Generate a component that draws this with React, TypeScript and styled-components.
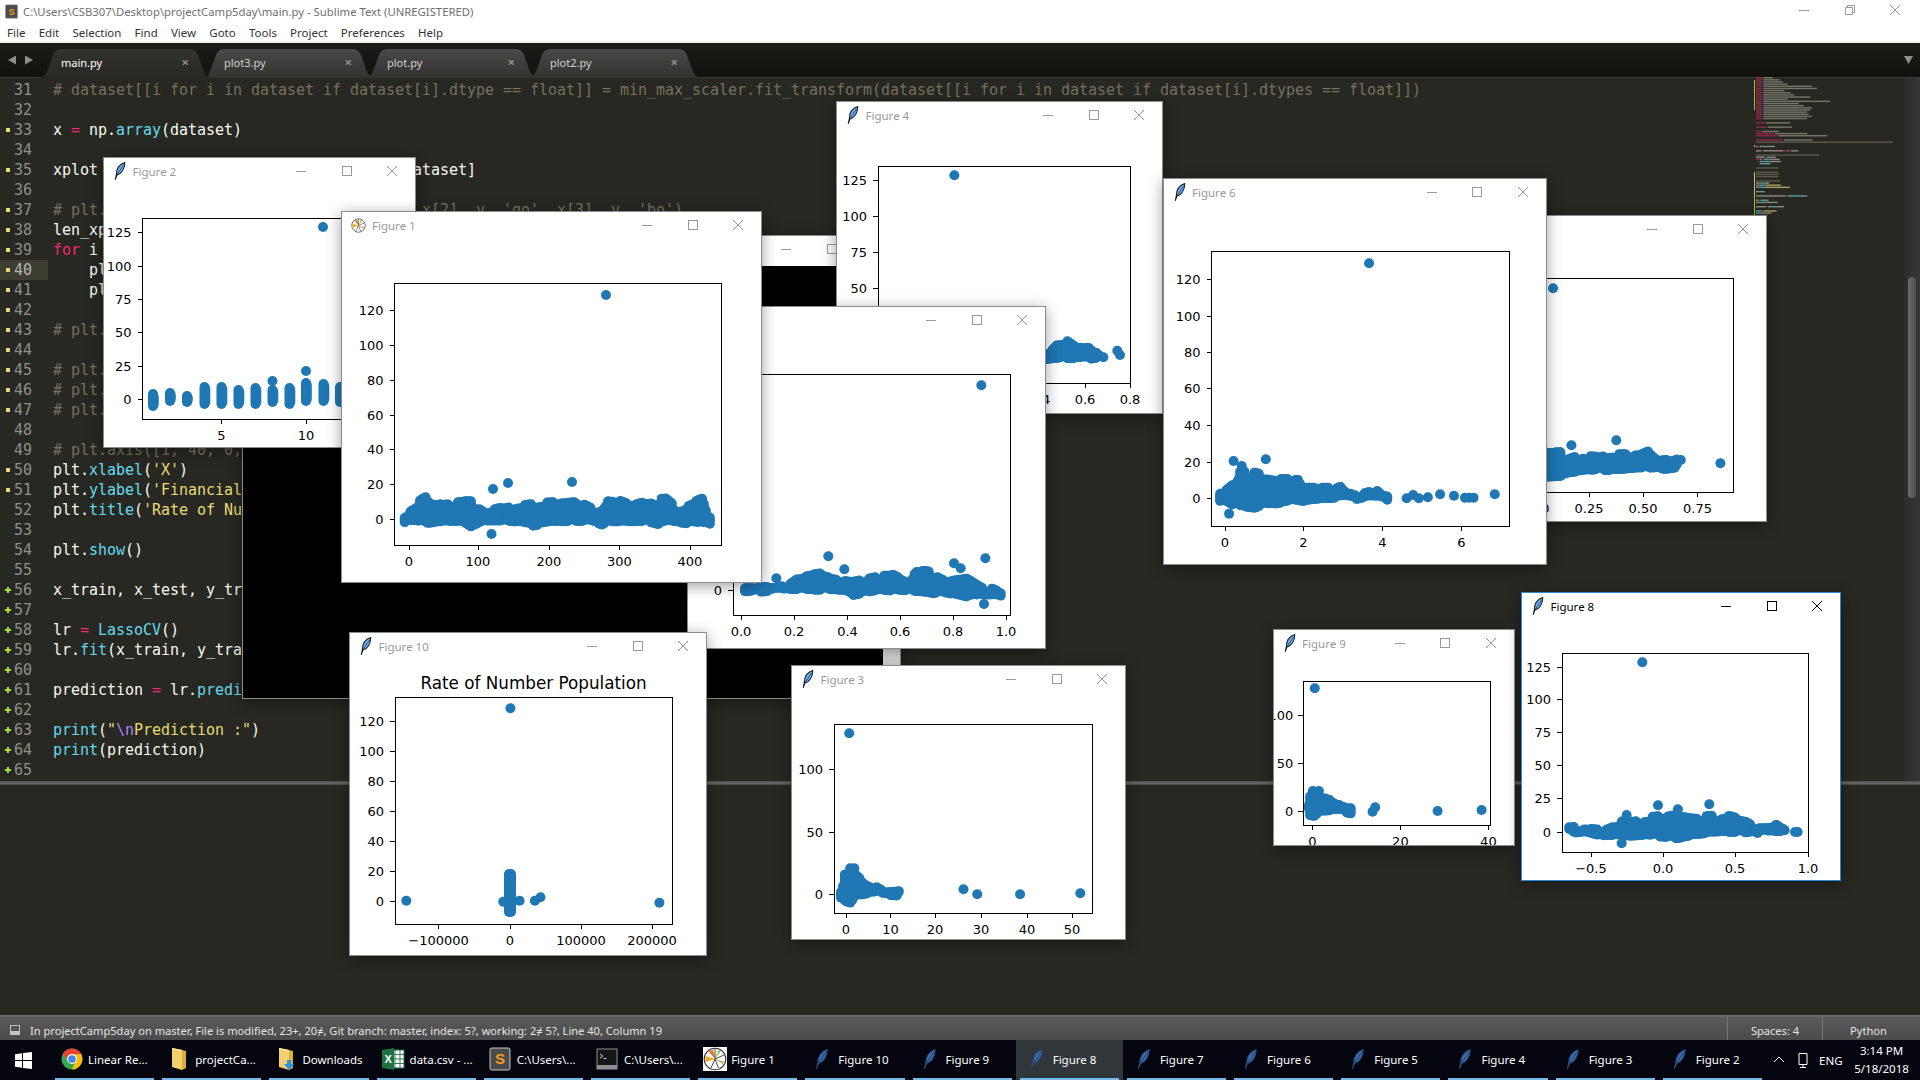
import React from "react";
import styled, { createGlobalStyle } from "styled-components";

const GlobalStyle = createGlobalStyle`
html, body {
    margin: 0;
    padding: 0;
    background: #272822;
}
`;

const UI_FONT = `"Noto Sans", "Open Sans", sans-serif`;
const BLUE = "#1f77b4";

type Tok = [string, string?];

const codeLines: Tok[][] = [
    [["# dataset[[i for i in dataset if dataset[i].dtype == float]] = min_max_scaler.fit_transform(dataset[[i for i in dataset if dataset[i].dtypes == float]])", "com"]],
    [],
    [["x "], ["=", "kw"], [" np."], ["array", "fn"], ["(dataset)"]],
    [],
    [["xplot "], ["=", "kw"], [" [dataset[cols].values "], ["for", "kw"], [" i "], ["in", "kw"], [" dataset]"]],
    [],
    [["# plt.plot(x[0], y, 'ro', x[1], y, 'ys', x[2], y, 'go', x[3], y, 'bo')", "com"]],
    [["len_xplot "], ["=", "kw"], [" "], ["len", "fn"], ["(xplot)"]],
    [["for", "kw"], [" i "], ["in", "kw"], [" "], ["range", "fn"], ["(len_xplot):"]],
    [["    plt."], ["scatter", "fn"], ["(xplot[i], y)"]],
    [["    plt."], ["figure", "fn"], ["()"]],
    [],
    [["# plt.plot(x[0], y, 'ro')", "com"]],
    [],
    [["# plt.plot(x[1], y, 'ys')", "com"]],
    [["# plt.plot(x[2], y, 'go')", "com"]],
    [["# plt.plot(x[3], y, 'bo')", "com"]],
    [],
    [["# plt.axis([1, 40, 0, 140])", "com"]],
    [["plt."], ["xlabel", "fn"], ["("], ["'X'", "str"], [")"]],
    [["plt."], ["ylabel", "fn"], ["("], ["'Financial Rate'", "str"], [")"]],
    [["plt."], ["title", "fn"], ["("], ["'Rate of Number Population'", "str"], [")"]],
    [],
    [["plt."], ["show", "fn"], ["()"]],
    [],
    [["x_train, x_test, y_train, y_test "], ["=", "kw"], [" "], ["train_test_split", "fn"], ["(x, y)"]],
    [],
    [["lr "], ["=", "kw"], [" "], ["LassoCV", "fn"], ["()"]],
    [["lr."], ["fit", "fn"], ["(x_train, y_train)"]],
    [],
    [["prediction "], ["=", "kw"], [" lr."], ["predict", "fn"], ["(x_test)"]],
    [],
    [["print", "fn"], ["("], ["\"", "str"], ["\\n", "esc"], ["Prediction :\"", "str"], [")"]],
    [["print", "fn"], ["(prediction)"]],
    [],
];

const FIRST_LINE = 31;
const markerFor = (n: number) => {
    if (n >= 56) return "add";
    if (n === 33 || n === 35 || (n >= 37 && n <= 47) || n === 50 || n === 51) return "mod";
    return "";
};

const tokColors: Record<string, string> = {
    kw: "#f92672",
    fn: "#66d9ef",
    str: "#e6db74",
    com: "#75715e",
    esc: "#ae81ff",
};

const Screen = styled.div`
position: relative;
width: 1920px;
height: 1080px;
overflow: hidden;
display: flex;
flex-direction: column;
background: #272822;
font-family: ${UI_FONT};
`;

const TitleRow = styled.div`
height: 24px;
background: #fff;
display: flex;
align-items: center;
padding: 0 0 2px 4px;
box-sizing: border-box;
color: #6f6f6f;
font-size: 11.3px;
`;

const TitleText = styled.span`
flex: 1;
margin-left: 4px;
`;

const WinControl = styled.span`
width: 45.5px;
height: 20px;
flex: none;
display: flex;
align-items: center;
justify-content: center;
`;

const WinControls = styled.div`
display: flex;
margin: -3px 2px 0 0;
`;

const MenuBar = styled.div`
height: 17px;
background: #fff;
border-bottom: 2px solid #f2f2f2;
display: flex;
align-items: center;
padding-left: 0.5px;
`;

const MenuItem = styled.span`
padding: 0 6.6px;
font-size: 11.5px;
color: #333;
`;

const TabBar = styled.div`
height: 35px;
box-sizing: border-box;
background: linear-gradient(#1b1b18, #11110e);
border-bottom: 1px solid #3a3a36;
display: flex;
align-items: flex-end;
`;

const TabArrows = styled.div`
width: 38px;
height: 29px;
flex: none;
display: flex;
gap: 9px;
padding: 0 0 5px 8px;
box-sizing: border-box;
align-items: center;
`;

const TabArrow = styled.span<{ $right?: boolean }>`
width: 8px;
height: 9px;
background: #8c8c89;
clip-path: ${p => (p.$right ? "polygon(0 0, 100% 50%, 0 100%)" : "polygon(100% 0, 0 50%, 100% 100%)")};
`;

const Tab = styled.div<{ $active?: boolean }>`
position: relative;
z-index: ${p => (p.$active ? 1 : 0)};
width: 175px;
height: 29px;
flex: none;
margin-right: -12px;
margin-bottom: -1px;
box-sizing: border-box;
padding: 0 24px 3px 23px;
display: flex;
align-items: center;
justify-content: space-between;
font-size: 11px;
color: ${p => (p.$active ? "#fff" : "#cfcfcb")};
background: ${p => (p.$active ? "linear-gradient(#33342f, #272822)" : "linear-gradient(#4a4a48, #313130)")};
clip-path: path("M0 29 C6 29 8 25 10 20 L15 6 C17 2 19 0 24 0 L151 0 C156 0 158 2 160 6 L165 20 C167 25 169 29 175 29 Z");
`;

const TabClose = styled.span`
color: #8e8e8a;
font-size: 13px;
line-height: 13px;
font-weight: 700;
`;

const TabSpacer = styled.div`
flex: 1;
height: 29px;
display: flex;
align-items: center;
justify-content: flex-end;
padding: 0 7px 5px 0;
box-sizing: border-box;
`;

const TabMenuArrow = styled.span`
width: 9px;
height: 8px;
background: #8c8c89;
clip-path: polygon(0 0, 100% 0, 50% 100%);
`;

const EditorPane = styled.div`
height: 703px;
padding-top: 2px;
box-sizing: border-box;
display: flex;
background: #272822;
font-family: "DejaVu Sans Mono", "Liberation Mono", monospace;
font-size: 15px;
line-height: 20px;
letter-spacing: -0.03px;
`;

const Gutter = styled.div`
width: 48px;
flex: none;
color: #8f908a;
`;

const GutterRow = styled.div<{ $current?: boolean }>`
position: relative;
height: 20px;
box-sizing: border-box;
padding-right: 16px;
text-align: right;
background: ${p => (p.$current ? "#3e3d32" : "transparent")};
color: ${p => (p.$current ? "#b4b4ae" : "#8f908a")};
`;

const ModMark = styled.span`
position: absolute;
left: 6px;
top: 8px;
width: 4px;
height: 4px;
background: #e6db74;
`;

const AddMark = styled.span`
position: absolute;
left: 5px;
top: 7px;
width: 6px;
height: 6px;
background:
    linear-gradient(#a6e22e, #a6e22e) center / 6px 2px no-repeat,
    linear-gradient(#a6e22e, #a6e22e) center / 2px 6px no-repeat;
`;

const CodeColumn = styled.div`
width: 1700px;
flex: none;
padding-left: 5px;
box-sizing: border-box;
white-space: pre;
color: #f8f8f2;
overflow: hidden;
`;

const CodeRow = styled.div<{ $guide?: boolean }>`
height: 20px;
background: ${p => (p.$guide ? "linear-gradient(#55554c 50%, transparent 50%) 0 0 / 1px 2px no-repeat repeat-y" : "none")};
`;

const Token = styled.span<{ $kind?: string }>`
color: ${p => (p.$kind ? tokColors[p.$kind] : "inherit")};
`;

const MinimapColumn = styled.div`
width: 150px;
margin-left: 6px;
margin-top: -3px;
flex: none;
opacity: 0.85;
`;

const ScrollTrack = styled.div`
width: 16px;
margin-top: -2px;
flex: none;
padding-top: 199px;
box-sizing: border-box;
background: linear-gradient(90deg, #2c2c2a, #363634);
display: flex;
justify-content: center;
`;

const ScrollThumb = styled.div`
width: 8px;
height: 221px;
border-radius: 4px;
background: linear-gradient(90deg, #6c6c6c, #4e4e4e);
`;

const Divider = styled.div`
height: 4px;
background: linear-gradient(#4a4a48, #6b6b69 50%, #454543);
`;

const BottomPane = styled.div`
flex: 1;
background: #272822;
`;

const StatusBar = styled.div`
height: 25px;
box-sizing: border-box;
border-top: 2px solid #6a6a6a;
background: linear-gradient(#5a5a5a, #4b4b4b);
display: flex;
align-items: center;
color: #e4e4e4;
font-size: 11.1px;
`;

const PanelToggle = styled.span`
width: 10px;
height: 10px;
margin: 2px 10px 0 10px;
border: 1px solid #c4c4c4;
border-bottom-width: 4px;
box-sizing: border-box;
`;

const StatusText = styled.span`
flex: 1;
padding-top: 3px;
`;

const StatusCell = styled.span<{ $w: number; $pad?: number }>`
width: ${p => p.$w}px;
height: 23px;
box-sizing: border-box;
padding: 3px ${p => p.$pad ?? 0}px 0 0;
border-left: 1px solid #777;
display: flex;
align-items: center;
justify-content: center;
`;

const Taskbar = styled.div`
height: 40px;
background: #04050e;
display: flex;
align-items: stretch;
color: #fff;
font-size: 11.5px;
`;

const StartButton = styled.div`
width: 51px;
flex: none;
padding-left: 15px;
box-sizing: border-box;
display: flex;
align-items: center;
`;

const TaskItem = styled.div<{ $active?: boolean }>`
position: relative;
width: 107.2px;
flex: none;
box-sizing: border-box;
padding: 0 0 2px 8.5px;
display: flex;
align-items: center;
gap: 4.5px;
white-space: nowrap;
background: ${p => (p.$active ? "#31363b" : "transparent")};

&::after {
    content: "";
    position: absolute;
    left: 4px;
    right: 4px;
    bottom: 0;
    height: 2px;
    background: #76b9ed;
}
`;

const TaskIcon = styled.span`
width: 24px;
display: flex;
justify-content: center;
flex: none;
`;

const Tray = styled.div`
flex: 1;
display: flex;
align-items: center;
padding-left: 7px;
gap: 10px;
`;

const TrayLang = styled.span`
font-size: 11.5px;
`;

const Clock = styled.div`
width: 62px;
flex: none;
margin-left: -2px;
text-align: center;
line-height: 18px;
font-size: 11.5px;
white-space: nowrap;
`;

const FigureFrame = styled.div<{ $x: number; $y: number; $w: number; $h: number; $active?: boolean }>`
position: absolute;
left: ${p => p.$x}px;
top: ${p => p.$y}px;
width: ${p => p.$w}px;
height: ${p => p.$h}px;
box-sizing: border-box;
background: #fff;
overflow: hidden;
border: 1px solid ${p => (p.$active ? "#2b88d8" : "#8c8c8c")};
box-shadow: 0 3px 14px rgba(0, 0, 0, 0.38);
display: flex;
flex-direction: column;
`;

const FigureTitleBar = styled.div<{ $active?: boolean }>`
height: 30px;
flex: none;
box-sizing: border-box;
padding: 0 0 4px 9px;
display: flex;
align-items: center;
font-size: 11.5px;
background: #fff;
color: ${p => (p.$active ? "#000" : "#999")};
`;

const FigureTitle = styled.span`
flex: 1;
margin-left: 6px;
white-space: nowrap;
`;

const FigureControl = styled.span`
width: 45.5px;
height: 26px;
flex: none;
display: flex;
align-items: center;
justify-content: center;
`;

const ChartSvg = styled.svg`
display: block;
flex: none;

text {
    font-family: "DejaVu Sans", sans-serif;
    font-size: 13px;
    fill: #000;
}
.chartTitle {
    font-size: 16.8px;
}
`;

const ConsoleFrame = styled(FigureFrame)`
background: #000;
`;

const ConsoleBody = styled.div`
flex: 1;
display: flex;
background: #000;
`;

const ConsoleOutput = styled.div`
flex: 1;
`;

const ConsoleScroll = styled.div`
width: 17px;
background: #dcdcdc;
`;

// --- icons ---
const Feather = ({ size = 18, dim = false }: { size?: number; dim?: boolean }) => (
    <svg width={size * 0.75} height={size} viewBox="0 0 12 16">
        <path d="M10.5 .5C6 2 3 6 3 11L2 15.5 3.6 11.6C7.5 10.5 10.5 6 10.5 .5Z" fill={dim ? "#3d6fb0" : "#6fb0ee"} stroke={dim ? "#27497c" : "#14202c"} strokeWidth=".9" strokeLinejoin="round" />
        <path d="M9.5 2.5 3.6 11.2" stroke={dim ? "#1b2c4a" : "#14202c"} strokeWidth=".6" />
    </svg>
);

const PinwheelIcon = ({ size, plate }: { size: number; plate?: boolean }) => (
    <svg width={size} height={size} viewBox="0 0 24 24">
        {plate && <rect width="24" height="24" fill="#fff" />}
        <circle cx="12" cy="12" r="10.8" fill="#fff" stroke="#333" strokeWidth="1.1" />
        <path d="M12 12 5.5 4.5 10 2.5Z" fill="#e8792b" />
        <path d="M12 12 2.5 9 2.5 15Z" fill="#f0a51e" />
        <path d="M12 12 18 4 15.5 3Z" fill="#8cc152" />
        <path d="M12 12 21 14.5 20 17.5Z" fill="#c9b27a" />
        <path d="M12 12 8 21M12 12 15.5 21M12 12 21 8M12 12 12 2" stroke="#444" strokeWidth="1" />
    </svg>
);

const ChromeIcon = () => (
    <svg width="22" height="22" viewBox="0 0 24 24">
        <circle cx="12" cy="12" r="11.5" fill="#34a853" />
        <path d="M12 .5A11.5 11.5 0 0 1 22 6.5L12 7 8 14 2 6.5A11.5 11.5 0 0 1 12 .5Z" fill="#ea4335" />
        <path d="M22 6.5A11.5 11.5 0 0 1 12 23.5L16 14 12 7Z" fill="#fbbc05" />
        <circle cx="12" cy="12" r="5.4" fill="#fff" />
        <circle cx="12" cy="12" r="4.2" fill="#4285f4" />
    </svg>
);

const FolderIcon = ({ download }: { download?: boolean }) => (
    <svg width="18" height="24" viewBox="0 0 18 24">
        <path d="M2 1 12 3V23L2 20Z" fill="#f3d06f" />
        <path d="M12 3 16 4V21L12 23Z" fill="#dcae3d" />
        <path d="M2 1 12 3 12 4 2 2Z" fill="#fff2b8" />
        {download && <path d="M10 13h4v4h3l-5 6-5-6h3Z" fill="#2f8fe0" />}
    </svg>
);

const ExcelIcon = () => (
    <svg width="24" height="24" viewBox="0 0 24 24">
        <rect x="9" y="3" width="14" height="18" fill="#fff" stroke="#1e7145" />
        <path d="M14 3v18M19 3v18M9 7.5h14M9 12h14M9 16.5h14" stroke="#1e7145" strokeWidth=".9" />
        <path d="M1 3 13 1V23L1 21Z" fill="#1e7145" />
        <text x="3.5" y="16" fontSize="11" fontWeight="700" fill="#fff" fontFamily="Liberation Sans">X</text>
    </svg>
);

const SublimeIcon = ({ size = 24 }: { size?: number }) => (
    <svg width={size} height={size} viewBox="0 0 24 24">
        <rect x="2" y="1" width="20" height="22" rx="2" fill="#4b4b4b" stroke="#c9c9c9" />
        <text x="12" y="17" textAnchor="middle" fontSize="15" fontWeight="700" fill="#f59a23" fontFamily="Liberation Sans">S</text>
    </svg>
);

const CmdIcon = () => (
    <svg width="24" height="24" viewBox="0 0 24 24">
        <rect x="2" y="2" width="20" height="20" fill="#161616" stroke="#8f8f8f" />
        <rect x="2" y="18" width="20" height="4" fill="#8f8f8f" />
        <path d="M5 7l3 2-3 2M8.5 11.5h3" stroke="#dcdcdc" strokeWidth=".9" fill="none" />
    </svg>
);

const WindowsLogo = () => (
    <svg width="17" height="17" viewBox="0 0 17 17">
        <path d="M0 2.3 7 1.3V8H0ZM8 1.1 17 0V8H8ZM0 9H7V15.7L0 14.7ZM8 9H17V17L8 15.9Z" fill="#fff" />
    </svg>
);

const Glyph = ({ kind, color }: { kind: "min" | "max" | "close" | "restore"; color: string }) => (
    <svg width="12" height="12" viewBox="0 0 12 12" fill="none" stroke={color} strokeWidth="1">
        {kind === "min" && <path d="M1 6.5h10" />}
        {kind === "max" && <rect x="1.5" y="1.5" width="9" height="9" />}
        {kind === "restore" && <path d="M1.5 3.5h7v7h-7zM3.5 3.5v-2h7v7h-2" />}
        {kind === "close" && <path d="M1 1l10 10M11 1 1 11" />}
    </svg>
);

// --- chart data, all in screen coordinates so the viewBox lines up with the window ---
type Env = [number, number, number];
type Pt = [number, number];
type Tick = [string, number];

interface Fig {
    name: string;
    x: number;
    y: number;
    w: number;
    h: number;
    axes: [number, number, number, number];
    xt: Tick[];
    yt: Tick[];
    dots: Pt[];
    env?: Env[];
    cols?: Env[];
    icon?: "pin";
    active?: boolean;
    title?: string;
    xlabel?: string;
    labelGap?: number;
}

// readings were taken off crops, so convert crop values to screen values here
const toEnv = (ox: number, sx: number, oy: number, rows: Env[]): Env[] =>
    rows.map(([x, t, b]) => [ox + x / sx, oy + t / 3 + 5, oy + b / 3 - 5]);
const toPts = (ox: number, sx: number, oy: number, rows: Pt[]): Pt[] =>
    rows.map(([x, y]) => [ox + x / sx, oy + y / 3]);

const figures: Fig[] = [
    {
        name: "Figure 7", x: 1400, y: 215, w: 367, h: 307,
        axes: [1500, 278, 1733.5, 492],
        xt: [["0.00", 1535], ["0.25", 1589], ["0.50", 1643], ["0.75", 1697.5]], yt: [],
        dots: toPts(1140, 2.45, 170, [[1012, 355], [1057, 826], [1167, 811], [1422, 880], [1325, 870]]),
        env: toEnv(1140, 2.45, 170, [[960, 836, 940], [1030, 836, 935], [1050, 856, 925], [1085, 840, 920], [1110, 850, 918], [1150, 840, 915], [1230, 840, 912], [1250, 830, 912], [1270, 850, 912], [1290, 850, 912], [1315, 846, 908]]),
    },
    {
        name: "Figure 4", x: 836, y: 101, w: 327, h: 313,
        axes: [878, 166, 1130, 383],
        xt: [["0.4", 1040], ["0.6", 1085], ["0.8", 1130]],
        yt: [["125", 180], ["100", 216], ["75", 252], ["50", 288]],
        dots: toPts(830, 3, 90, [[373, 256], [862, 782], [870, 795], [820, 802]]),
        env: toEnv(830, 3, 90, [[600, 775, 825], [650, 775, 825], [680, 745, 825], [712, 740, 822], [740, 760, 822], [785, 757, 822], [800, 775, 820], [812, 790, 815]]),
    },
    {
        name: "Figure 2", x: 103, y: 157, w: 313, h: 291,
        axes: [142.5, 218, 500, 419],
        xt: [["5", 221.5], ["10", 306]],
        yt: [["125", 232], ["100", 266], ["75", 299], ["50", 332], ["25", 366], ["0", 399]],
        dots: [[323, 227], [272.5, 381], [306, 371]],
        cols: [[153, 394, 406], [153.8, 397, 404], [170, 393, 401], [170.8, 395, 399], [187, 396, 402], [187.8, 398, 400], [204.5, 387, 404], [205.3, 389, 402], [221.5, 387, 404], [222.3, 389, 402], [238.5, 390, 404], [239.3, 392, 402], [255.5, 388, 404], [256.3, 390, 402], [272.5, 390, 402], [273.3, 392, 400], [289.5, 388, 404], [290.3, 390, 402], [306, 383, 401], [306.8, 385, 399], [323.5, 384, 401], [324.3, 386, 399], [340, 387, 402]],
    },
    {
        name: "Figure 5", x: 687, y: 306, w: 359, h: 343,
        axes: [733, 374, 1010, 615],
        xt: [["0.0", 741], ["0.2", 794], ["0.4", 847.5], ["0.6", 900], ["0.8", 953], ["1.0", 1006]],
        yt: [["0", 590]],
        dots: toPts(680, 3, 220, [[904, 496], [445, 1009], [916, 1015], [493, 1048], [289, 1075], [822, 1030], [842, 1045], [912, 1152]]),
        env: toEnv(680, 3, 220, [[195, 1098, 1124], [270, 1092, 1125], [320, 1080, 1125], [355, 1055, 1125], [420, 1045, 1125], [490, 1060, 1125], [520, 1065, 1140], [595, 1050, 1125], [640, 1050, 1128], [680, 1070, 1130], [710, 1040, 1130], [760, 1045, 1135], [800, 1065, 1135], [860, 1055, 1150], [900, 1080, 1140], [950, 1102, 1140], [968, 1118, 1140]]),
    },
    {
        name: "Figure 1", x: 341, y: 211, w: 421, h: 372, icon: "pin",
        axes: [394.6, 283, 721, 545],
        xt: [["0", 409], ["100", 478], ["200", 549], ["300", 619.5], ["400", 690]],
        yt: [["120", 310], ["100", 345], ["80", 380], ["60", 415], ["40", 449], ["20", 484], ["0", 519]],
        dots: [[606, 295], [493, 489], [508, 483], [572, 482], [491.5, 534]],
        env: toEnv(0, 2.063, 440, [[835, 225, 250], [850, 185, 258], [878, 160, 265], [900, 185, 262], [920, 175, 262], [955, 173, 262], [972, 173, 278], [1000, 200, 262], [1050, 185, 262], [1100, 175, 272], [1150, 170, 262], [1185, 165, 262], [1220, 190, 262], [1242, 200, 272], [1255, 160, 262], [1300, 185, 262], [1335, 170, 262], [1358, 190, 270], [1365, 155, 262], [1400, 195, 262], [1440, 170, 270], [1452, 163, 265], [1465, 225, 250]]),
    },
    {
        name: "Figure 6", x: 1162.5, y: 178, w: 384, h: 387,
        axes: [1211, 251, 1509, 526],
        xt: [["0", 1224.5], ["2", 1303], ["4", 1382], ["6", 1461]],
        yt: [["120", 279], ["100", 316], ["80", 352], ["60", 388.6], ["40", 425], ["20", 462], ["0", 498]],
        dots: toPts(1140, 2.45, 170, [[560, 280], [228, 873], [307, 868], [248, 888], [217, 1031], [652, 985], [668, 975], [682, 985], [704, 982], [734, 973], [768, 977], [795, 983], [805, 983], [816, 983], [868, 973]]),
        env: toEnv(1140, 2.45, 170, [[195, 965, 995], [205, 955, 1005], [225, 935, 1020], [245, 895, 1025], [280, 895, 1030], [310, 905, 1018], [340, 910, 1015], [365, 910, 1010], [385, 910, 1010], [400, 940, 1008], [440, 940, 1000], [465, 940, 1000], [490, 930, 998], [520, 960, 1000], [555, 950, 998], [575, 940, 998], [605, 975, 998]]),
    },
    {
        name: "Figure 10", x: 349, y: 632, w: 358, h: 324,
        title: "Rate of Number Population", xlabel: "X",
        axes: [395, 697, 672, 924],
        xt: [["\u2212100000", 438.5], ["0", 510], ["100000", 581], ["200000", 652]],
        yt: [["120", 721], ["100", 751], ["80", 781], ["60", 811], ["40", 841], ["20", 871], ["0", 901]],
        dots: toPts(340, 1.96, 620, [[334, 265], [130, 842], [626, 848], [320, 845], [352, 842], [382, 842], [393, 832]]),
        cols: [[509, 874, 912], [511, 874, 912]],
    },
    {
        name: "Figure 3", x: 791, y: 665, w: 335, h: 275,
        axes: [834, 724, 1092.5, 913],
        xt: [["0", 846], ["10", 890.5], ["20", 935], ["30", 981], ["40", 1027], ["50", 1072]],
        yt: [["100", 769], ["50", 832], ["0", 894]],
        dots: toPts(340, 1.96, 620, [[998, 340], [1222, 808], [1249, 823], [1333, 823], [1451, 820], [1000, 745], [1008, 745]]),
        env: toEnv(340, 1.96, 620, [[982, 815, 835], [990, 745, 860], [1000, 735, 865], [1010, 745, 845], [1025, 765, 838], [1040, 782, 836], [1060, 800, 835], [1098, 803, 832]]),
    },
    {
        name: "Figure 9", x: 1272.6, y: 629, w: 242, h: 217, labelGap: 10,
        axes: [1303, 681, 1490, 825],
        xt: [["0", 1312], ["20", 1400], ["40", 1488]],
        yt: [["100", 715], ["50", 763], ["0", 811]],
        dots: toPts(1260, 2.613, 580, [[142, 325], [137, 633], [153, 633], [232, 690], [293, 695], [300, 682], [463, 693], [578, 690]]),
        env: toEnv(1260, 2.613, 580, [[125, 655, 705], [130, 625, 728], [140, 625, 730], [155, 630, 712], [165, 645, 710], [190, 654, 708], [215, 670, 706], [240, 676, 705]]),
    },
    {
        name: "Figure 8", x: 1521, y: 592, w: 320, h: 289, active: true,
        axes: [1562, 653, 1808, 852],
        xt: [["\u22120.5", 1591], ["0.0", 1663], ["0.5", 1735], ["1.0", 1808]],
        yt: [["125", 667], ["100", 699], ["75", 732], ["50", 765], ["25", 798], ["0", 832]],
        dots: [...toPts(1260, 2.613, 580, [[999, 247], [1040, 676], [1174, 673], [945, 790], [958, 705], [1092, 688]]), [1795, 832], [1797.7, 832]],
        env: toEnv(1260, 2.613, 580, [[808, 738, 762], [820, 732, 775], [850, 727, 770], [900, 732, 785], [935, 716, 785], [1000, 703, 780], [1040, 698, 785], [1090, 690, 790], [1120, 695, 783], [1170, 698, 775], [1215, 693, 772], [1270, 710, 772], [1300, 730, 768], [1350, 724, 768], [1375, 745, 768]]),
    },
];

// interpolate the envelope and add lumps so the edge looks like overlapping markers
const rough = (env: Env[], seed: number): Env[] => {
    const out: Env[] = [];
    let s = seed;
    const rnd = () => {
        s = (s * 16807) % 2147483647;
        return (s % 1000) / 1000;
    };
    let lumpTop = 0;
    let lumpBottom = 0;
    let n = 0;
    for (let i = 0; i < env.length - 1; i++) {
        const [x0, t0, b0] = env[i];
        const [x1, t1, b1] = env[i + 1];
        for (let x = x0; x < x1; x += 2) {
            if (n % 4 === 0) {
                lumpTop = rnd() * 7 - 2;
                lumpBottom = rnd() * 3;
            }
            n++;
            const k = (x - x0) / (x1 - x0);
            out.push([x, t0 + (t1 - t0) * k + lumpTop, b0 + (b1 - b0) * k - lumpBottom]);
        }
    }
    return out;
};

const Chart = ({ fig, seed }: { fig: Fig; seed: number }) => {
    const [l, t, r, b] = fig.axes;
    const w = fig.w - 2;
    const h = fig.h - 32;
    const gap = fig.labelGap ?? 11;
    const cols = fig.cols ?? (fig.env ? rough(fig.env, seed) : []);
    return (
        <ChartSvg width={w} height={h} viewBox={`${fig.x + 1} ${fig.y + 31} ${w} ${h}`}>
            {cols.map(([x, y1, y2], i) => (
                <line key={i} x1={x} x2={x} y1={y1} y2={y2} stroke={BLUE} strokeWidth="10" strokeLinecap="round" />
            ))}
            {fig.dots.map(([x, y], i) => (
                <circle key={i} cx={x} cy={y} r="5" fill={BLUE} />
            ))}
            <rect x={l} y={t} width={r - l} height={b - t} fill="none" stroke="#000" strokeWidth="1" shapeRendering="crispEdges" />
            {fig.xt.map(([label, x]) => (
                <g key={label}>
                    <line x1={x} x2={x} y1={b} y2={b + 5} stroke="#000" shapeRendering="crispEdges" />
                    <text x={x} y={b + 16} textAnchor="middle" dominantBaseline="central">{label}</text>
                </g>
            ))}
            {fig.yt.map(([label, y]) => (
                <g key={label}>
                    <line x1={l - 5} x2={l} y1={y} y2={y} stroke="#000" shapeRendering="crispEdges" />
                    <text x={l - gap} y={y} textAnchor="end" dominantBaseline="central">{label}</text>
                </g>
            ))}
            {fig.title && (
                <text className="chartTitle" x={(l + r) / 2} y={t - 14} textAnchor="middle" dominantBaseline="central">{fig.title}</text>
            )}
            {fig.xlabel && (
                <text x={(l + r) / 2} y={b + 40} textAnchor="middle">{fig.xlabel}</text>
            )}
        </ChartSvg>
    );
};

const FigureWindow = ({ fig, seed }: { fig: Fig; seed: number }) => {
    const ctl = fig.active ? "#000" : "#999";
    return (
        <FigureFrame $x={fig.x} $y={fig.y} $w={fig.w} $h={fig.h} $active={fig.active}>
            <FigureTitleBar $active={fig.active}>
                {fig.icon === "pin" ? <PinwheelIcon size={15} /> : <Feather />}
                <FigureTitle>{fig.name}</FigureTitle>
                <FigureControl><Glyph kind="min" color={ctl} /></FigureControl>
                <FigureControl><Glyph kind="max" color={ctl} /></FigureControl>
                <FigureControl><Glyph kind="close" color={ctl} /></FigureControl>
            </FigureTitleBar>
            <Chart fig={fig} seed={seed} />
        </FigureFrame>
    );
};

// minimap drawn from the code itself, first 30 lines are imports/setup we never see in full
const headerLines: [number, number][] = [
    [7, 12], [7, 20], [7, 24], [7, 30], [7, 60], [7, 66], [7, 26], [7, 34], [7, 38], [7, 58], [7, 30], [7, 82],
    [7, 44], [7, 50], [7, 60], [7, 58], [7, 54], [7, 56], [7, 60], [7, 54], [0, 0], [10, 30], [0, 0], [12, 30],
    [0, 0], [6, 20], [20, 40], [24, 60], [0, 0], [30, 35],
];

const Minimap = () => {
    const CW = 0.9;
    const LH = 2.15;
    const rows: React.ReactNode[] = [];
    headerLines.forEach(([kw, rest], i) => {
        if (!kw) return;
        rows.push(<rect key={`h${i}`} x={2} y={i * LH} width={kw * CW} height={1.4} fill="#c22a5e" />);
        rows.push(<rect key={`r${i}`} x={2 + kw * CW + 1} y={i * LH} width={rest * CW * 0.9} height={1.4} fill="#9b9b8e" />);
    });
    codeLines.forEach((line, i) => {
        let col = 0;
        line.forEach(([text, kind], j) => {
            const lead = text.length - text.trimStart().length;
            rows.push(
                <rect
                    key={`c${i}-${j}`}
                    x={2 + (col + lead) * CW}
                    y={(i + 30) * LH}
                    width={(text.length - lead) * CW}
                    height={1.4}
                    fill={kind ? tokColors[kind] : "#b9b9b0"}
                />,
            );
            col += text.length;
        });
    });
    return (
        <svg width="150" height="150" viewBox="0 0 150 150">
            <rect x="0" y="3" width="1" height="30" fill="#a6e22e" />
            <rect x="0" y="68" width="1" height="2" fill="#e6db74" />
            <rect x="0" y="95" width="1" height="30" fill="#e6db74" />
            <rect x="0" y="118" width="1" height="22" fill="#a6e22e" />
            <g opacity="0.8">{rows}</g>
        </svg>
    );
};

const menuItems = ["File", "Edit", "Selection", "Find", "View", "Goto", "Tools", "Project", "Preferences", "Help"];
const tabs = ["main.py", "plot3.py", "plot.py", "plot2.py"];

const taskItems: { label: string; icon: React.ReactNode; active?: boolean }[] = [
    { label: "Linear Re...", icon: <ChromeIcon /> },
    { label: "projectCa...", icon: <FolderIcon /> },
    { label: "Downloads", icon: <FolderIcon download /> },
    { label: "data.csv - ...", icon: <ExcelIcon /> },
    { label: "C:\\Users\\...", icon: <SublimeIcon /> },
    { label: "C:\\Users\\...", icon: <CmdIcon /> },
    { label: "Figure 1", icon: <PinwheelIcon size={24} plate /> },
    { label: "Figure 10", icon: <Feather size={20} dim /> },
    { label: "Figure 9", icon: <Feather size={20} dim /> },
    { label: "Figure 8", icon: <Feather size={20} dim />, active: true },
    { label: "Figure 7", icon: <Feather size={20} dim /> },
    { label: "Figure 6", icon: <Feather size={20} dim /> },
    { label: "Figure 5", icon: <Feather size={20} dim /> },
    { label: "Figure 4", icon: <Feather size={20} dim /> },
    { label: "Figure 3", icon: <Feather size={20} dim /> },
    { label: "Figure 2", icon: <Feather size={20} dim /> },
];

export default function App() {
    return (
        <Screen>
            <GlobalStyle />
            <TitleRow>
                <SublimeIcon size={15} />
                <TitleText>C:\Users\CSB307\Desktop\projectCamp5day\main.py - Sublime Text (UNREGISTERED)</TitleText>
                <WinControls>
                    <WinControl><Glyph kind="min" color="#999" /></WinControl>
                    <WinControl><Glyph kind="restore" color="#999" /></WinControl>
                    <WinControl><Glyph kind="close" color="#999" /></WinControl>
                </WinControls>
            </TitleRow>
            <MenuBar>
                {menuItems.map(m => <MenuItem key={m}>{m}</MenuItem>)}
            </MenuBar>
            <TabBar>
                <TabArrows><TabArrow /><TabArrow $right /></TabArrows>
                {tabs.map((t, i) => (
                    <Tab key={t} $active={i === 0}>
                        <span>{t}</span>
                        <TabClose>×</TabClose>
                    </Tab>
                ))}
                <TabSpacer><TabMenuArrow /></TabSpacer>
            </TabBar>
            <EditorPane>
                <Gutter>
                    {codeLines.map((_, i) => {
                        const n = FIRST_LINE + i;
                        const mark = markerFor(n);
                        return (
                            <GutterRow key={n} $current={n === 40}>
                                {mark === "mod" && <ModMark />}
                                {mark === "add" && <AddMark />}
                                {n}
                            </GutterRow>
                        );
                    })}
                </Gutter>
                <CodeColumn>
                    {codeLines.map((line, i) => (
                        <CodeRow key={i} $guide={i === 9 || i === 10}>
                            {line.map(([text, kind], j) => <Token key={j} $kind={kind}>{text}</Token>)}
                        </CodeRow>
                    ))}
                </CodeColumn>
                <MinimapColumn><Minimap /></MinimapColumn>
                <ScrollTrack><ScrollThumb /></ScrollTrack>
            </EditorPane>
            <Divider />
            <BottomPane />
            <StatusBar>
                <PanelToggle />
                <StatusText>In projectCamp5day on master, File is modified, 23+, 20≠, Git branch: master, index: 5?, working: 2≠ 5?, Line 40, Column 19</StatusText>
                <StatusCell $w={95}>Spaces: 4</StatusCell>
                <StatusCell $w={98} $pad={6}>Python</StatusCell>
            </StatusBar>
            <Taskbar>
                <StartButton><WindowsLogo /></StartButton>
                {taskItems.map((t, i) => (
                    <TaskItem key={i} $active={t.active}>
                        <TaskIcon>{t.icon}</TaskIcon>
                        <span>{t.label}</span>
                    </TaskItem>
                ))}
                <Tray>
                    <svg width="36" height="18" viewBox="0 0 36 18" fill="none" stroke="#fff">
                        <path d="M1 11l5-5 5 5" />
                        <path d="M26 2.5h8v11h-8zM30 13.5v3M27 16.5h6" />
                    </svg>
                    <TrayLang>ENG</TrayLang>
                    <Clock>3:14 PM<br />5/18/2018</Clock>
                </Tray>
            </Taskbar>

            <ConsoleFrame $x={242} $y={235} $w={659} $h={464}>
                <FigureTitleBar>
                    <FigureTitle />
                    <FigureControl><Glyph kind="min" color="#999" /></FigureControl>
                    <FigureControl><Glyph kind="max" color="#999" /></FigureControl>
                    <FigureControl><Glyph kind="close" color="#999" /></FigureControl>
                </FigureTitleBar>
                <ConsoleBody>
                    <ConsoleOutput />
                    <ConsoleScroll />
                </ConsoleBody>
            </ConsoleFrame>
            {figures.map((f, i) => <FigureWindow key={f.name} fig={f} seed={i * 97 + 13} />)}
        </Screen>
    );
}
